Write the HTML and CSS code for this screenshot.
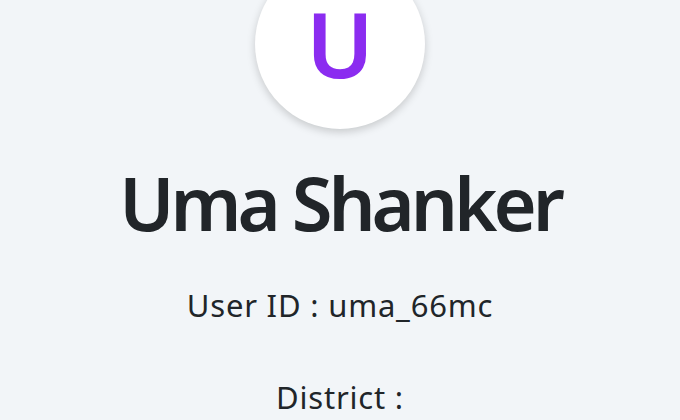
FILE: index.html
```html
<!DOCTYPE html>
<html>
<head>
<meta charset="utf-8">
<link rel="stylesheet" href="styles.css">
</head>
<body>
<main class="profile">
  <div class="avatar"><span class="initial">U</span></div>
  <h1 class="name">Uma Shanker</h1>
  <p class="info">User ID : uma_66mc</p>
  <p class="info">District :</p>
</main>
</body>
</html>
```
FILE: styles.css
```css
html, body {
  margin: 0;
  padding: 0;
  background: #f2f5f8;
  height: 100%;
  overflow: hidden;
}
.profile {
  display: flex;
  flex-direction: column;
  align-items: center;
  font-family: "Noto Sans", "Open Sans", sans-serif;
  color: #212529;
}
.avatar {
  width: 170px;
  height: 170px;
  margin-top: -41px;
  border-radius: 50%;
  background: #ffffff;
  box-shadow: 0 3px 8px rgba(0, 0, 0, 0.18);
  display: flex;
  align-items: flex-end;
  justify-content: center;
}
.initial {
  font-family: "Noto Sans", sans-serif;
  font-size: 91px;
  line-height: 1;
  font-weight: 600;
  color: #8b2cf0;
  margin-bottom: 40px;
}
.name {
  margin: 30px 0 0;
  font-size: 74px;
  font-weight: 600;
  letter-spacing: -0.055em;
  line-height: 1.2;
}
.info {
  margin: 0;
  font-size: 31px;
  letter-spacing: 0.8px;
  line-height: 90px;
}
.info:first-of-type {
  margin-top: 12px;
}
.info + .info {
  margin-top: 2px;
}
```
